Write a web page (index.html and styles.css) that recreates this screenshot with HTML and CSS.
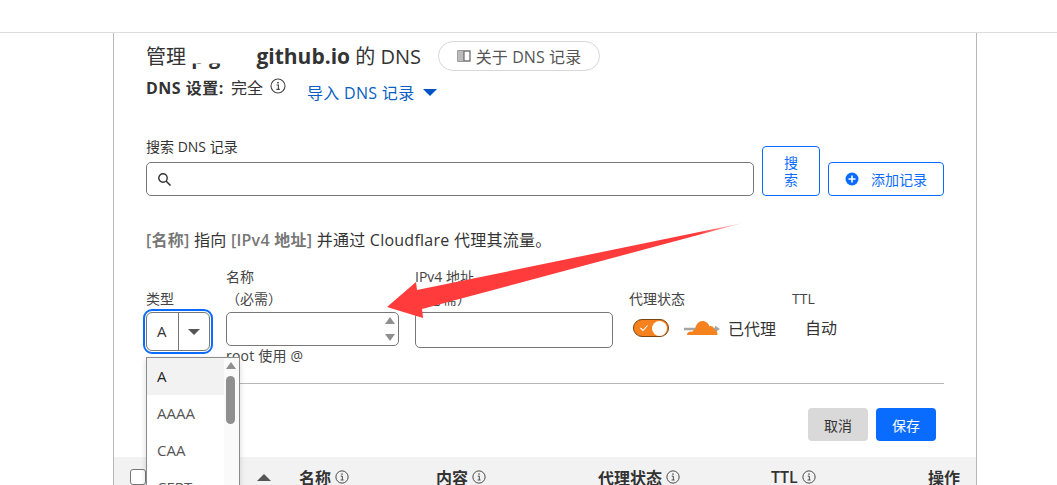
FILE: index.html
```html
<!DOCTYPE html>
<html lang="en">
<head>
  <meta charset="UTF-8">
  <title>DNS</title>
  <link rel="stylesheet" href="styles.css">
</head>
<body>

  <svg class="defs" width="0" height="0">
    <symbol id="info" viewBox="0 0 16 16">
      <circle cx="8" cy="8" r="7" fill="none" stroke="currentColor" stroke-width="1.1"/>
      <path d="M6.6 7h1.8v4.2M6.4 11.4h3.4" fill="none" stroke="currentColor" stroke-width="1.1"/>
      <circle cx="8" cy="4.7" r="0.9" fill="currentColor"/>
    </symbol>
  </svg>

  <div class="page">
    <div class="card">

      <div class="title-row">
        <h1>管理 <span class="masked">p g</span> <b>github.io</b> 的 DNS</h1>
        <button class="pill">
          <svg width="14" height="12" viewBox="0 0 14 12"><path d="M1 1h12v10H1z" fill="none" stroke="#777" stroke-width="1.4"/><path d="M1 1h6v10H1z" fill="#bbb"/><path d="M7 1v10" stroke="#666" stroke-width="1.2"/></svg>
          关于 DNS 记录
        </button>
      </div>

      <div class="setting-row">
        <span class="setting"><b>DNS 设置:</b> 完全 <svg class="info"><use href="#info"/></svg></span>
        <a class="import-link">导入 DNS 记录<i class="caret"></i></a>
      </div>

      <div class="search-block">
        <div class="search-main">
          <label>搜索 DNS 记录</label>
          <div class="search-input">
            <svg width="15" height="15" viewBox="0 0 15 15"><circle cx="6" cy="6" r="4.2" fill="none" stroke="#333" stroke-width="1.4"/><path d="M9 9l4.5 4.5" stroke="#333" stroke-width="1.6"/></svg>
          </div>
        </div>
        <button class="btn-outline btn-search">搜索</button>
        <button class="btn-outline btn-add">
          <svg width="14" height="14" viewBox="0 0 14 14"><circle cx="7" cy="7" r="6.5" fill="#0a6cff"/><path d="M3.5 7h7M7 3.5v7" stroke="#fff" stroke-width="1.6"/></svg>
          添加记录
        </button>
      </div>

      <p class="hint"><b>[名称]</b> 指向 <b>[IPv4 地址]</b> 并通过 Cloudflare 代理其流量。</p>

      <div class="form-row">
        <div class="field field-type">
          <label>类型</label>
          <div class="select">
            <span class="select-value">A</span>
            <span class="select-arrow"><i></i></span>
          </div>
          <ul class="dropdown">
            <li class="active">A</li>
            <li>AAAA</li>
            <li>CAA</li>
            <li>CERT</li>
            <div class="scrollbar"><i class="scroll-up"></i><i class="scroll-thumb"></i></div>
          </ul>
        </div>
        <div class="field field-name">
          <label><span>名称</span><span class="req">（必需）</span></label>
          <div class="text-input name-input"><i class="spin-up"></i><i class="spin-down"></i></div>
          <div class="help">root 使用 @</div>
        </div>
        <div class="field field-ip">
          <label><span>IPv4 地址</span><span class="req">（必需）</span></label>
          <div class="text-input ip-input"></div>
        </div>
        <div class="field field-proxy">
          <label>代理状态</label>
          <div class="proxy-value">
            <span class="toggle">
              <svg width="10" height="8" viewBox="0 0 10 8"><path d="M1.5 4l2.500 2.500 4.500-5" fill="none" stroke="#fff" stroke-width="1.1"/></svg>
              <i></i>
            </span>
            <svg class="cloud" width="36" height="16" viewBox="0 0 36 16">
              <path d="M0 9h33" stroke="#a5a5a5" stroke-width="2.4"/>
              <path d="M31 5.500l5 3.500-5 3.500z" fill="#a5a5a5"/>
              <path d="M3 15c0-2 1.500-3.400 3.500-3.400 .5 0 1 .1 1.400.3C9 10.500 10 9.800 11 9.600 11.800 4 15 1 18.500 1c3.500 0 6 2.300 7 5.400 1-.5 2-.4 3 .2 1 .7 1.400 1.800 1.300 3 2.300 0 3.700 2.300 3.700 5.400z" fill="#f6821f"/>
            </svg>
            <span class="proxied">已代理</span>
          </div>
        </div>
        <div class="field field-ttl">
          <label>TTL</label>
          <div class="ttl-value">自动</div>
        </div>
      </div>

      <hr class="divider">

      <div class="actions">
        <button class="btn-cancel">取消</button>
        <button class="btn-save">保存</button>
      </div>

      <div class="table-head">
        <span><i class="checkbox"></i></span>
        <span><i class="sort"></i></span>
        <span>名称 <svg class="info"><use href="#info"/></svg></span>
        <span>内容 <svg class="info"><use href="#info"/></svg></span>
        <span>代理状态 <svg class="info"><use href="#info"/></svg></span>
        <span>TTL <svg class="info"><use href="#info"/></svg></span>
        <span>操作</span>
      </div>
    </div>

    <!-- annotation drawn over the screenshot -->
    <svg class="arrow" width="1057" height="485" viewBox="0 0 1057 485">
      <defs>
        <linearGradient id="fade" x1="0" x2="1" y1="0" y2="0">
          <stop offset="0.88" stop-color="#ff3b3b"/>
          <stop offset="1" stop-color="#ff3b3b" stop-opacity="0.15"/>
        </linearGradient>
      </defs>
      <path d="M387 307L416 282L417 290L743 223L422 309L423 318z" fill="url(#fade)"/>
    </svg>
  </div>

</body>
</html>
```

FILE: styles.css
```css
* {
  box-sizing: border-box;
}
body {
  margin: 0;
  background-color: white;
  color: #333;
  font-family: 'Open Sans', 'Noto Sans CJK SC', sans-serif;
  font-size: 14px;
}
button {
  font-family: inherit;
  cursor: pointer;
}
.defs {
  display: block;
  height: 0;
}
.page {
  position: relative;
  height: 485px;
  padding-top: 32px;
  overflow: hidden;
}
.card {
  width: 864px;
  height: 453px;
  margin-left: 113px;
  border-left: 1px solid #b8b8b8;
  border-right: 1px solid #b8b8b8;
  padding: 9px 32px 0 32px;
  position: relative;
}
.card::before {
  content: "";
  position: absolute;
  top: 0;
  left: -114px;
  width: 1057px;
  border-top: 1px solid #ddd;
}

/* title */
.title-row {
  display: flex;
  align-items: center;
  height: 30px;
}
h1 {
  margin: 0;
  width: 292px;
  font-size: 20px;
  font-weight: 400;
  line-height: 28px;
  white-space: nowrap;
  color: #333;
}
h1 b {
  font-weight: 700;
  font-size: 21px;
}
.masked {
  display: inline-block;
  width: 60px;
  font-weight: 700;
  clip-path: inset(21px 0 0 0);
}
.pill {
  display: flex;
  align-items: center;
  justify-content: center;
  gap: 5px;
  width: 162px;
  height: 30px;
  border: 1px solid #d8d8d8;
  border-radius: 15px;
  background: white;
  color: #555;
  font-size: 16px;
  letter-spacing: 0.1px;
  padding: 0;
}
.setting-row {
  display: flex;
  align-items: flex-start;
  height: 75px;
}
.setting {
  display: flex;
  align-items: center;
  gap: 5px;
  width: 161px;
  height: 24px;
  margin-top: 4px;
  font-size: 16px;
  white-space: nowrap;
}
.setting b {
  font-weight: 700;
  margin-right: 2px;
  letter-spacing: 0.5px;
}
.info {
  width: 16px;
  height: 16px;
  color: #444;
  flex: none;
}
.setting .info {
  margin-left: 2px;
  margin-top: -3px;
}
.import-link {
  display: flex;
  align-items: center;
  height: 24px;
  margin-top: 9px;
  color: #0a5fc4;
  font-size: 16px;
  letter-spacing: 0.3px;
  white-space: nowrap;
}
.caret {
  margin-left: 9px;
  border-left: 7px solid transparent;
  border-right: 7px solid transparent;
  border-top: 7px solid #0051c3;
}

/* search */
.search-block {
  display: flex;
  align-items: flex-end;
  height: 50px;
}
.search-main {
  width: 608px;
  margin-right: 8px;
}
.search-main label {
  display: block;
  height: 23px;
  line-height: 16px;
  font-size: 14px;
  white-space: nowrap;
}
.search-input {
  display: flex;
  align-items: center;
  height: 34px;
  border: 1px solid #777;
  border-radius: 5px;
  padding-left: 10px;
}
.btn-outline {
  border: 1px solid #0a6cff;
  border-radius: 4px;
  background: white;
  color: #0a6cff;
  font-size: 14px;
  padding: 0;
}
.btn-search {
  width: 58px;
  height: 50px;
  margin-right: 8px;
  padding: 0 20px;
  line-height: 17px;
}
.btn-add {
  display: flex;
  align-items: center;
  justify-content: center;
  gap: 12px;
  width: 116px;
  height: 34px;
}
.hint {
  margin: 33px 0 0 0;
  height: 22px;
  line-height: 22px;
  font-size: 16px;
  letter-spacing: 0.25px;
  white-space: nowrap;
}
.hint b {
  font-weight: 600;
  color: #777;
}

/* form */
.form-row {
  display: flex;
  align-items: flex-start;
  height: 124px;
  margin-top: 15px;
}
.field {
  position: relative;
  flex: none;
}
.field label {
  display: flex;
  flex-direction: column;
  justify-content: flex-end;
  height: 46px;
  padding-bottom: 2px;
  line-height: 22px;
  font-size: 14px;
  white-space: nowrap;
  color: #444;
}
.field-type {
  width: 80px;
}
.field-name {
  width: 189px;
}
.field-ip {
  width: 214px;
}
.field-proxy {
  width: 163px;
}
.field-ttl {
  width: 100px;
}
.select {
  display: flex;
  width: 64px;
  height: 39px;
  border: 1px solid #777;
  border-radius: 6px;
  outline: 2px solid #0a6cff;
  outline-offset: 1px;
}
.select-value {
  width: 31px;
  line-height: 37px;
  padding-left: 10px;
  font-size: 15px;
}
.select-arrow {
  flex: 1;
  display: flex;
  align-items: center;
  justify-content: center;
  border-left: 1px solid #777;
}
.select-arrow i {
  border-left: 6px solid transparent;
  border-right: 6px solid transparent;
  border-top: 6px solid #555;
}
.dropdown {
  position: absolute;
  top: 91px;
  left: 0;
  width: 94px;
  margin: 0;
  padding: 0;
  list-style: none;
  background: white;
  border: 1px solid #8c8c8c;
  box-shadow: 0 2px 6px rgba(0,0,0,0.15);
  z-index: 5;
  color: #555;
  font-size: 15px;
}
.dropdown li {
  height: 37px;
  line-height: 36px;
  padding-left: 10px;
}
.dropdown li.active {
  background-color: #f2f2f2;
  color: #222;
  margin-right: 15px;
}
.scrollbar {
  position: absolute;
  top: 0;
  right: 0;
  bottom: 0;
  width: 15px;
  background: #fafafa;
}
.scroll-up {
  position: absolute;
  top: 4px;
  left: 2px;
  border-left: 5px solid transparent;
  border-right: 5px solid transparent;
  border-bottom: 7px solid #8f8f8f;
}
.scroll-thumb {
  position: absolute;
  top: 18px;
  left: 2px;
  width: 9px;
  height: 48px;
  border-radius: 5px;
  background-color: #8f8f8f;
}
.text-input {
  position: relative;
  border: 1px solid #777;
  border-radius: 5px;
}
.name-input {
  width: 173px;
  height: 34px;
}
.spin-up,
.spin-down {
  position: absolute;
  right: 3px;
  border-left: 5px solid transparent;
  border-right: 5px solid transparent;
}
.spin-up {
  top: 4px;
  border-bottom: 7px solid #8f8f8f;
}
.spin-down {
  bottom: 4px;
  border-top: 7px solid #8f8f8f;
}
.help {
  height: 20px;
  line-height: 20px;
  font-size: 14px;
  letter-spacing: 0.2px;
  white-space: nowrap;
  color: #444;
}
.ip-input {
  width: 198px;
  height: 36px;
}
.proxy-value {
  display: flex;
  align-items: center;
  height: 32px;
  padding-left: 4px;
}
.toggle {
  display: flex;
  align-items: center;
  justify-content: space-between;
  width: 36px;
  height: 18px;
  padding: 0 1px 0 5px;
  border: 1px solid #7a4510;
  border-radius: 9px;
  background-color: #f6821f;
}
.toggle i {
  width: 15px;
  height: 15px;
  border-radius: 50%;
  background: white;
}
.cloud {
  margin-left: 15px;
}
.proxied {
  margin-left: 8px;
  font-size: 16px;
}
.ttl-value {
  height: 32px;
  line-height: 32px;
  padding-left: 13px;
  font-size: 16px;
}

.divider {
  margin: -7px 0 0 0;
  border: none;
  border-top: 1px solid #b8b8b8;
}
.actions {
  display: flex;
  justify-content: flex-end;
  gap: 8px;
  padding-right: 8px;
  margin-top: 24px;
}
.actions button {
  width: 60px;
  height: 33px;
  border: none;
  border-radius: 4px;
  font-size: 14px;
  padding: 0;
}
.btn-cancel {
  background-color: #d9d9d9;
  color: #333;
}
.btn-save {
  background-color: #0a6cff;
  color: white;
}

/* table header */
.table-head {
  display: grid;
  grid-template-columns: 127px 42px 137px 162px 173px 157px auto;
  align-items: center;
  height: 40px;
  margin: 16px -32px 0 -32px;
  padding-left: 16px;
  background-color: #f2f2f2;
  font-size: 16px;
  font-weight: 600;
  color: #333;
  white-space: nowrap;
}
.table-head span {
  display: flex;
  align-items: center;
  gap: 4px;
}
.table-head .info {
  width: 14px;
  height: 14px;
}
.checkbox {
  width: 16px;
  height: 16px;
  border: 1px solid #777;
  border-radius: 3px;
  background: white;
}
.sort {
  border-left: 7px solid transparent;
  border-right: 7px solid transparent;
  border-bottom: 7px solid #555;
}
.arrow {
  position: absolute;
  top: 0;
  left: 0;
  z-index: 10;
  pointer-events: none;
}
```
